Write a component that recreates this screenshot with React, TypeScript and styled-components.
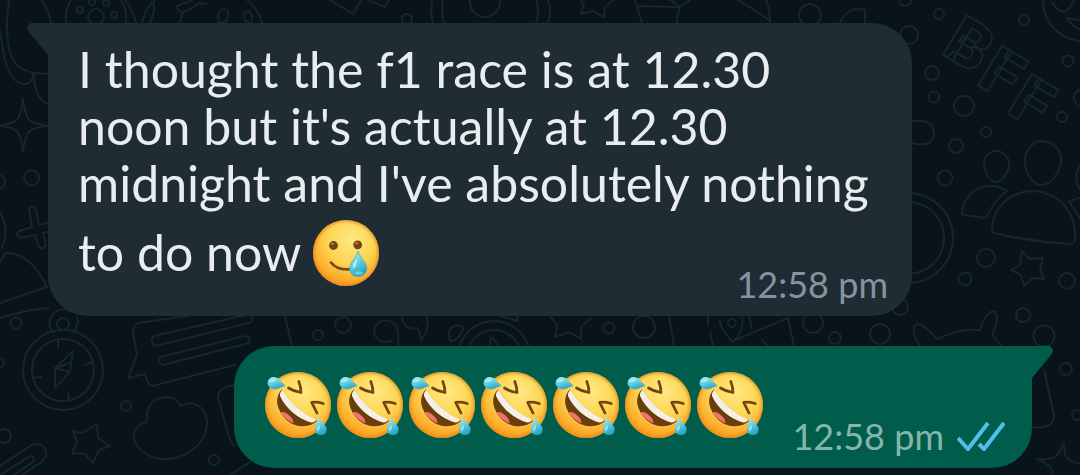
import React from 'react';
import styled, { createGlobalStyle, css } from 'styled-components';

const GlobalStyle = createGlobalStyle`
  *, *::before, *::after { box-sizing: border-box; }
  body {
    margin: 0;
    background: #08131a;
    font-family: Lato, "Open Sans", sans-serif;
  }
`;

const Chat = styled.main`
  position: relative;
  min-height: 100vh;
  padding: 23px 48px 7px;
  overflow: hidden;
`;

const WallpaperSvg = styled.svg`
  position: absolute;
  inset: 0;
  width: 100%;
  height: 100%;
  fill: none;
  stroke: #19252c;
  stroke-width: 2;
  stroke-linecap: round;
  stroke-linejoin: round;
`;

const Thread = styled.ol`
  position: relative;
  display: flex;
  flex-direction: column;
  gap: 30px;
  margin: 0;
  padding: 0;
  list-style: none;
`;

const Bubble = styled.li<{ $own?: boolean }>`
  position: relative;
  color: #e9edef;
  ${({ $own }) =>
    $own
      ? css`
          display: flex;
          align-items: flex-end;
          align-self: flex-end;
          gap: 29px;
          padding: 26px 27px 10px 31px;
          border-radius: 40px 0 40px 40px;
          background: #005c4b;
        `
      : css`
          display: grid;
          margin-right: 120px;
          padding: 18px 24px 10px 30px;
          border-radius: 0 40px 40px 40px;
          background: #202c33;
        `}
`;

const Tail = styled.svg<{ $own?: boolean }>`
  position: absolute;
  top: 0;
  width: 22px;
  height: 33px;
  ${({ $own }) =>
    $own
      ? css`
          right: -21px;
          fill: #005c4b;
          transform: scaleX(-1);
        `
      : css`
          left: -21px;
          fill: #202c33;
        `}
`;

const Message = styled.p`
  grid-area: 1 / 1;
  margin: 0;
  padding-bottom: 20px;
  font-size: 50px;
  line-height: 57px;
`;

const Emoji = styled.svg<{ $inline?: boolean }>`
  flex: none;
  width: 66px;
  height: 66px;
  overflow: visible;
  ${({ $inline }) =>
    $inline &&
    css`
      margin-top: 8px;
      vertical-align: -15px;
    `}
`;

const EmojiRow = styled.div`
  display: flex;
  gap: 6px;
  margin-bottom: 20px;
`;

const Meta = styled.div<{ $own?: boolean }>`
  grid-area: 1 / 1;
  place-self: end;
  display: flex;
  align-items: center;
  gap: 13px;
  font-size: 36px;
  line-height: 44px;
  white-space: nowrap;
  color: ${({ $own }) => ($own ? '#86b5ab' : '#8594a0')};
`;

const Ticks = styled.svg`
  width: 48px;
  height: 30px;
  fill: none;
  stroke: #53bdeb;
  stroke-width: 4;
`;

const circles: [number, number, number][] = [
  [96, 17, 30], [80, 10, 3], [92, 2, 3], [106, 3, 3], [114, 15, 3], [96, 17, 8],
  [407, 19, 5], [485, 2, 15], [810, 15, 11], [905, 0, 6], [909, 35, 9],
  [939, 14, 5], [1024, 20, 5], [1068, 61, 5.5], [1062, 117, 5], [932, 73, 7],
  [934, 97, 5.5], [964, 106, 10], [986, 132, 5], [956, 146, 7], [945, 178, 7.5],
  [986, 258, 9], [965, 279, 6.5], [1067, 281, 8], [1083, 1, 40], [1083, 98, 9],
  [908, 238, 45], [908, 238, 36], [1023, 315, 7], [1044, 336, 10.5], [900, 307, 8],
  [31.5, 178, 7.5], [-2, 182, 7], [16, 323, 5.5], [-1, 363, 5], [4, 436, 7],
  [63, 370, 40], [63, 370, 31], [63, 324, 6], [126, 406, 5], [214, 460, 5],
  [318, 335, 5], [343, 325, 8], [494, 357, 36], [494, 357, 27], [609, 328, 5.5],
  [644, 327, 11], [732, 323, 4], [813, 323, 10], [835, 338, 6], [880, 334, 10],
  [1066, 369, 6], [1077, 415, 5],
];

const doodles = [
  'M9 0C6 20 7 40 10 52C15 68 25 72 35 73L48 74',
  'M0 30C3 50 5 84 26 84Q33 83 33 73M34 74C34 90 38 100 48 104M41 0Q49 10 51 23',
  'M125 0Q133 10 136 23M142 23Q145 8 155 0M150 23Q156 10 153 2',
  'M192 0L177 6Q177 12 183 12L180 23M183 12Q195 8 198 3L206 4M247 0Q258 8 262 23',
  'M330 0L353 14L361 0M368 0L385 7L389 0',
  'M432 0Q430 12 433 23M443 0Q441 12 444 23M536 0Q540 12 536 23M548 0Q552 12 548 23',
  'M581 0L584 5L581 14L593 11L604 17L605 7L613 0',
  'M635 0L642 23M637 6L680 7M671 0L680 7L690 0M680 7Q677 15 677 23M738 0Q755 10 769 20M766 0Q770 10 770 23',
  'M840 23Q848 5 865 10V23',
  'M23 99C26 122 28 122 48 126C28 128 26 130 23 151C20 130 18 128 0 126C18 122 20 122 23 99Z',
  'M48 223L39 225L36 210Q33 204 29 209L32 227L19 231Q15 235 20 238L35 235L39 247Q44 250 46 245L43 233L48 232',
  'M0 212Q10 230 2 248M0 262L5 253Q30 252 47 287L0 303M0 318Q25 310 48 308',
  'M53 332Q46 324 52 315Q60 306 70 311M73 332Q80 325 77 317',
  'M58 340V347M92 362L85 365M34 378L41 377M69 399L68 393M73 351L55 368V388L70 372ZM55 368L70 372M59 367L71 362',
  'M73 431L82 433L97 424L98 438L110 446L99 450L93 463L85 454L72 453L77 441Z',
  'M0 466L30 446Q40 441 45 449Q49 456 40 463L22 475M0 475L30 456Q36 456 33 462L14 475',
  'M187 316L138 323Q133 326 133 332L137 355L128 378L145 374Q147 384 152 386L235 365',
  'M154 336L250 314Q255 320 249 323L155 346Q149 341 154 336ZM161 357L245 336Q252 338 249 343L163 365Q156 362 161 357Z',
  'M147 422C145 405 155 397 167 397Q177 398 181 406C195 398 208 410 207 425C205 445 185 460 163 459C145 458 132 445 134 433Q137 423 147 422Z',
  'M234 385Q218 387 218 398L229 437Q232 445 234 446M230 475L250 462',
  'M285 316L292 346M392 341Q377 345 374 332C374 318 395 315 398 332Q399 340 398 346',
  'M402 316C402 328 412 330 418 328L421 340Q430 330 427 316M464 327Q452 322 449 333L450 341Q458 342 464 327',
  'M490 346Q490 336 493 338L498 346M500 316L518 321L517 316M550 316L557 325L555 337L569 332L581 339V327L591 318',
  'M669 316L674 346M708 316V325M710 332L713 345M720 320Q719 328 733 342Q745 330 742 316M735 340L788 318L794 346M762 340L768 346M749 316L752 328',
  'M920 346C912 335 912 325 918 324Q925 325 937 339Q960 328 980 330C985 315 990 310 995 312Q1000 320 992 335L1002 346',
  'M1052 2Q1058 12 1065 12Q1073 5 1074 0M1080 20L1067 18Q1072 27 1080 29',
  'M912 121H922Q934 122 934 135Q932 148 912 143',
  'M996 151C1004 151 1010 158 1009 166C1007 176 1000 182 996 182C990 182 984 172 984 164C984 156 990 151 996 151Z',
  'M1042 141C1054 141 1062 151 1061 162C1059 175 1050 185 1041 185C1032 185 1024 171 1025 159C1026 149 1033 141 1042 141Z',
  'M986 218L964 215Q961 214 962 210C965 196 976 186 990 186Q1000 186 1007 191Q995 199 986 218Z',
  'M994 233Q992 232 992 228C994 204 1013 191 1034 191C1060 193 1077 213 1075 240Q1074 244 1070 244Q1032 242 994 233Z',
  'M1080 165Q1073 176 1080 190M1080 198L1069 201L1080 219',
  'M1022 251L1030 259L1043 258L1040 269L1044 279L1033 278L1024 286L1021 275L1011 270L1020 265Z',
  'M1044 370L1054 415Q1054 430 1032 427',
  'M1064 443C1064 457 1066 460 1080 464M1064 443C1058 457 1055 460 1037 459C1050 465 1053 468 1052 475',
];

function Wallpaper() {
  return (
    <WallpaperSvg viewBox="0 0 1080 475" preserveAspectRatio="xMidYMin slice" aria-hidden="true">
      {circles.map(([cx, cy, r], i) => (
        <circle key={i} cx={cx} cy={cy} r={r} />
      ))}
      <ellipse cx="223" cy="16" rx="5" ry="7" transform="rotate(20 223 16)" />
      <ellipse cx="248" cy="17" rx="4" ry="6" transform="rotate(-15 248 17)" />
      {doodles.map((d) => (
        <path key={d} d={d} />
      ))}
      <text
        x="0 46 86"
        y="0 8 17"
        transform="translate(940 53) rotate(31)"
        fontFamily="Roboto, sans-serif"
        fontSize="65"
        fontWeight="900"
      >
        BFF
      </text>
    </WallpaperSvg>
  );
}

function Face({ id }: { id: string }) {
  return (
    <>
      <defs>
        <radialGradient id={`${id}-face`} cx="0.58" cy="0.3" r="0.72">
          <stop offset="0" stopColor="#fee984" />
          <stop offset="0.5" stopColor="#fed552" />
          <stop offset="0.85" stopColor="#fbad2b" />
          <stop offset="1" stopColor="#f4921c" />
        </radialGradient>
        <radialGradient id={`${id}-rim`} cx="0.5" cy="0.5" r="0.5">
          <stop offset="0.88" stopColor="#ee9420" stopOpacity="0" />
          <stop offset="1" stopColor="#e58a1e" stopOpacity="0.8" />
        </radialGradient>
        <linearGradient id={`${id}-tear`} x1="0" y1="0" x2="0.4" y2="1">
          <stop offset="0" stopColor="#b4edf2" />
          <stop offset="0.55" stopColor="#62cfe3" />
          <stop offset="1" stopColor="#2ba4c4" />
        </linearGradient>
      </defs>
      <circle cx="33" cy="33" r="33" fill={`url(#${id}-face)`} />
      <circle cx="33" cy="33" r="33" fill={`url(#${id}-rim)`} />
    </>
  );
}

function TearySmile() {
  return (
    <Emoji $inline viewBox="0 0 66 66" role="img" aria-label="Smiling face with tear">
      <Face id="smile" />
      <circle cx="20.5" cy="25.5" r="4.4" fill="#714614" />
      <circle cx="44.7" cy="24.8" r="4.4" fill="#714614" />
      <ellipse cx="19.5" cy="23.8" rx="1.7" ry="1.1" fill="#ad8045" />
      <ellipse cx="43.7" cy="23.2" rx="1.7" ry="1.1" fill="#ad8045" />
      <path d="M18 42.5Q24.5 51 39 49" fill="none" stroke="#744610" strokeWidth="2.6" strokeLinecap="round" />
      <path
        d="M45 31C47 38 53.7 42 53.7 48.5C53.7 53.3 50 56.5 45 56.5C40 56.5 36.6 53.3 36.6 48.5C36.6 42 43.3 38 45 31Z"
        fill="url(#smile-tear)"
        stroke="#38a5b9"
        strokeWidth="0.6"
      />
      <path d="M44 39Q39 44 40 48Q43 50 44 39Z" fill="#d8fbfb" opacity="0.7" />
      <ellipse cx="46" cy="53" rx="4" ry="1.8" fill="#a4edf2" opacity="0.5" />
    </Emoji>
  );
}

function Rofl({ id }: { id: string }) {
  return (
    <Emoji viewBox="0 0 66 66" role="img" aria-label="Rolling on the floor laughing">
      <Face id={id} />
      <path
        d="M17 17.5C12 22 11 30 13.5 36C18 48 28 54.5 38 54.3C44 54 49 52 52 49C37 42 25 31 17 17.5Z"
        fill="#693d0c"
      />
      <path d="M15.5 40.5C19 38 29 45 28.5 51.5C23 49 18.5 45.5 15.5 40.5Z" fill="#f0716f" />
      <path d="M17.5 18C25 30.5 36 41 51 47.5Q50 51 46 50.5C33 47 20.5 36 15 24Q14.5 20 17.5 18Z" fill="#f5efea" />
      <path
        d="M23.5 16Q29 19.5 36 20.5Q36 15 33.8 9.5M58.3 31.5Q52 29.5 46.7 30.3Q49 35 52 41"
        fill="none"
        stroke="#704612"
        strokeWidth="2.7"
        strokeLinecap="round"
        strokeLinejoin="round"
      />
      <path
        d="M21 14C16 14.5 14 17.5 9 17.3C5 17 2.5 14 2.7 10.5C3 6.8 6 4.8 9.5 5C14.5 5.5 16 10.5 21 14Z"
        fill={`url(#${id}-tear)`}
      />
      <path
        d="M53.2 44.5C55 50 61.7 52 61.7 57.5C61.7 61 59 63.3 55.7 63C52 63 49.7 60 50 56.5C50.5 52.5 53.4 50 53.2 44.5Z"
        fill={`url(#${id}-tear)`}
      />
      <path d="M5 10Q6 6.5 10 7.5Q10 10 5 10ZM54.5 53Q51.5 56 52.5 59Q55 58 54.5 53Z" fill="#d8fbfb" opacity="0.7" />
    </Emoji>
  );
}

function BubbleTail({ own }: { own?: boolean }) {
  return (
    <Tail $own={own} viewBox="0 0 22 33" aria-hidden="true">
      <path d="M22 0H5C0 0-1 5 2 9L21 32H22Z" />
    </Tail>
  );
}

const laughs = ['a', 'b', 'c', 'd', 'e', 'f', 'g'];

export default function App() {
  return (
    <>
      <GlobalStyle />
      <Chat>
        <Wallpaper />
        <Thread>
          <Bubble>
            <BubbleTail />
            <Message>
              I thought the f1 race is at 12.30
              <br />
              noon but it's actually at 12.30
              <br />
              midnight and I've absolutely nothing
              <br />
              to do now <TearySmile />
            </Message>
            <Meta>
              <time dateTime="12:58">12:58 pm</time>
            </Meta>
          </Bubble>
          <Bubble $own>
            <BubbleTail own />
            <EmojiRow>
              {laughs.map((key) => (
                <Rofl key={key} id={`laugh-${key}`} />
              ))}
            </EmojiRow>
            <Meta $own>
              <time dateTime="12:58">12:58 pm</time>
              <Ticks viewBox="0 0 48 30" role="img" aria-label="Read">
                <path d="M1 17L11 28L31 2M22 23L27 28L47 2" />
              </Ticks>
            </Meta>
          </Bubble>
        </Thread>
      </Chat>
    </>
  );
}
